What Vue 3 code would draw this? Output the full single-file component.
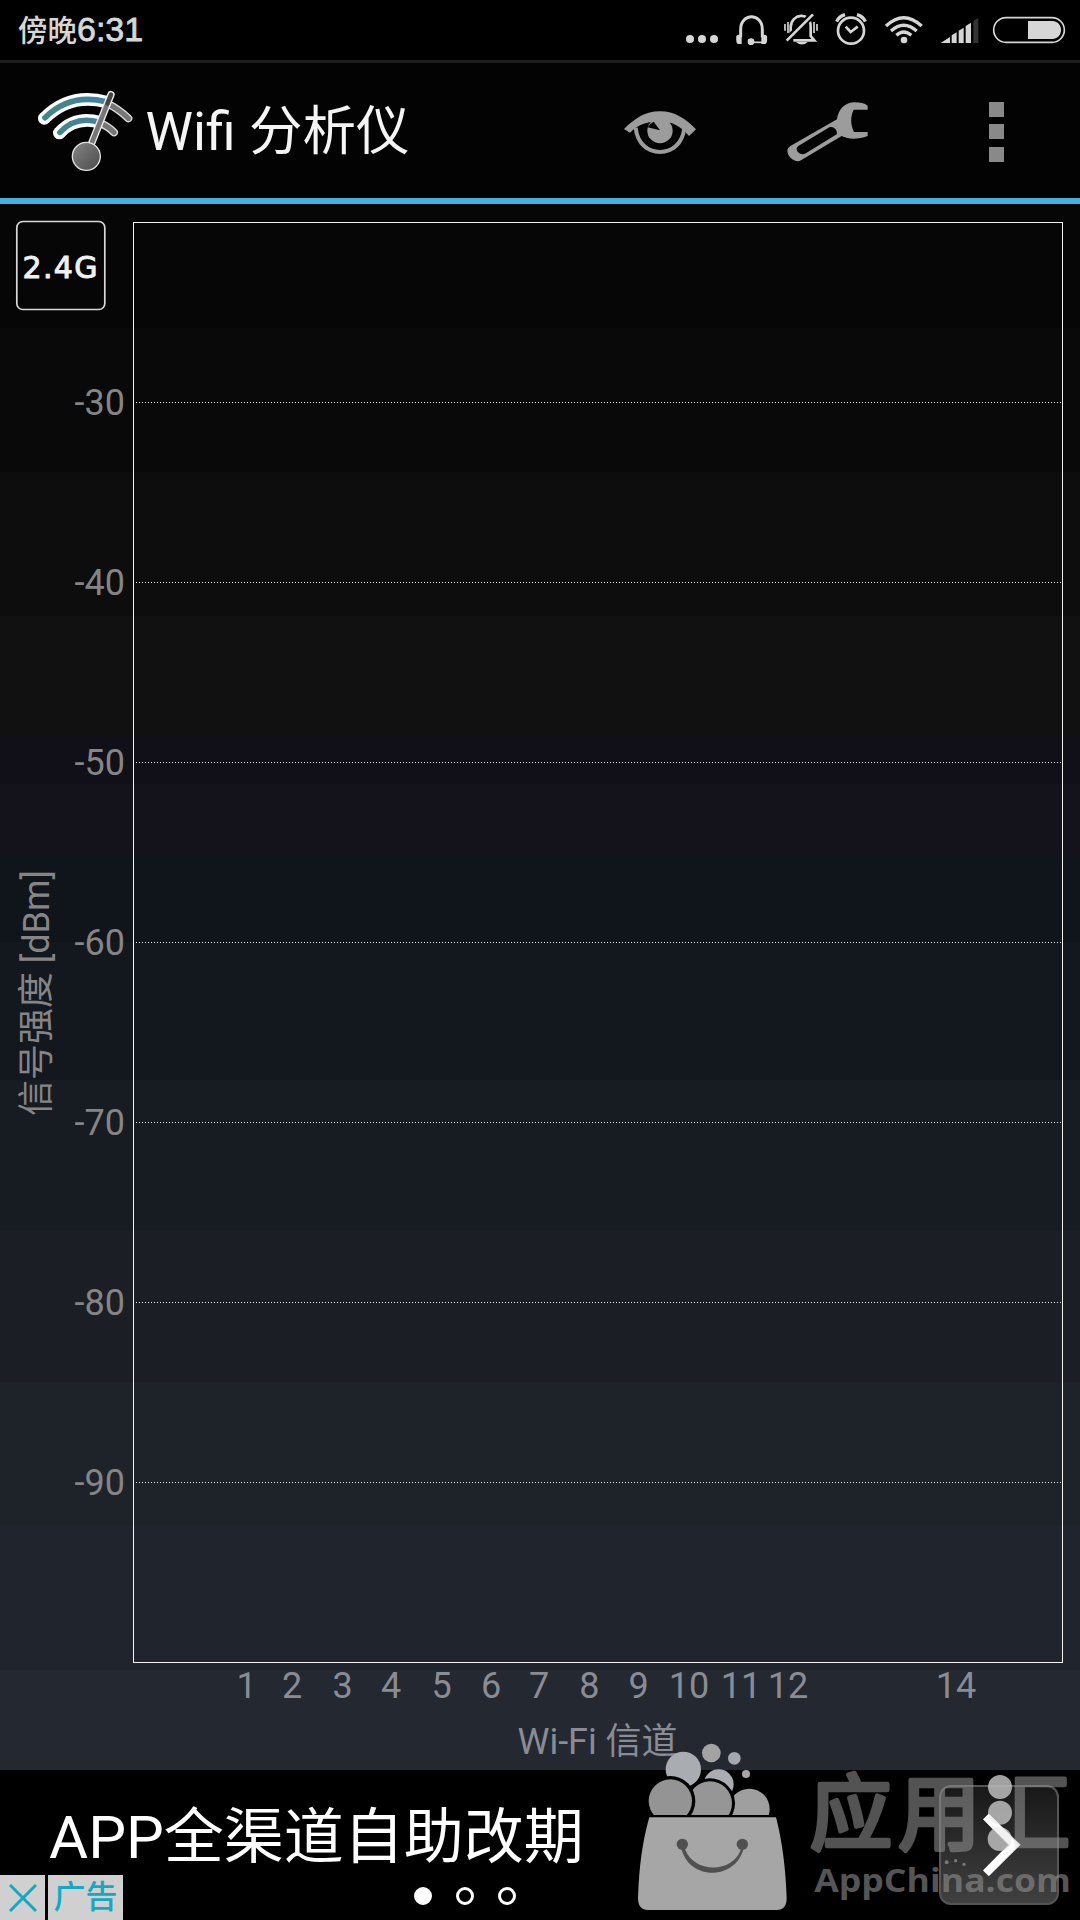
<script setup>
const levels = [-30, -40, -50, -60, -70, -80, -90].map((v, i) => ({ v, y: 402.5 + i * 180 }))
const channels = [
  [1, 246.5], [2, 292], [3, 342.5], [4, 391], [5, 441.5], [6, 491], [7, 539],
  [8, 589.3], [9, 638.7], [10, 689], [11, 741], [12, 788], [14, 956],
]
</script>

<template>
  <div class="screen">
    <div class="status">
      <div class="time"><span class="cjk">傍晚</span><span class="digits">6:31</span></div>
      <svg width="410" height="60" viewBox="0 0 1230 180" fill="none" stroke="#d6d6d6">
        <g fill="#d6d6d6" stroke="none">
          <circle cx="60" cy="117" r="12" /><circle cx="96" cy="117" r="12" /><circle cx="132" cy="117" r="12" />
        </g>
        <path d="M212 112V88C212 38 277 38 277 88V112" stroke-width="9" />
        <path d="M199 108Q207 100 215 108V132H205Q197 132 199 108ZM291 108Q283 100 274 108V132H285Q293 132 291 108Z" fill="#d6d6d6" stroke="none" />
        <circle cx="243" cy="125" r="10" fill="#d6d6d6" stroke="none" />
        <path d="M243 127H280" stroke-width="5" />
        <path d="M362 106V82C362 40 424 32 422 82V108L433 121H370" stroke-width="8" />
        <path d="M349 122L429 43" stroke="#000" stroke-width="20" />
        <path d="M350 122L429 43" stroke-width="8" />
        <path d="M345 72V92M354 66V99M432 66V99M441 72V92" stroke-width="5" />
        <path d="M378 126H413Q396 141 378 126Z" fill="#d6d6d6" stroke="none" />
        <circle cx="543" cy="92" r="39" stroke-width="8" />
        <path d="M527 80L542 96L563 80" stroke-width="8" />
        <path d="M500 65Q506 50 525 44M586 65Q580 50 561 44" stroke-width="10" />
        <path d="M648 78Q701 28 755 78M663 93Q701 59 740 93M679 106Q701 86 724 106" stroke-width="10" />
        <circle cx="702" cy="120" r="10" fill="#d6d6d6" stroke="none" />
        <path d="M812 129L840 111V129ZM845 129V106L860 97V129ZM866 129V92L881 83V129ZM887 129V78L903 68V129Z" fill="#d6d6d6" stroke="none" />
        <path d="M910 129V63L925 54V129Z" fill="#333" stroke="none" />
        <rect x="971" y="53" width="212" height="74" rx="37" stroke-width="5" />
        <path d="M1074 63H1146C1182 63 1182 117 1146 117H1074Z" fill="#d6d6d6" stroke="none" />
      </svg>
    </div>

    <header class="bar">
      <svg class="logo" width="100" height="86" viewBox="105 270 300 258" fill="none" stroke-linecap="round">
        <defs>
          <linearGradient id="teal" x1="0" x2="1"><stop offset="0" stop-color="#43897f" /><stop offset="1" stop-color="#3f83a5" /></linearGradient>
          <linearGradient id="ball" x1="0" y1="0" x2="1" y2="1"><stop offset="0" stop-color="#858585" /><stop offset="1" stop-color="#4b4b4b" /></linearGradient>
        </defs>
        <path d="M320 313Q353 327 385 358M300 373Q322 380 342 400" stroke="#ddd" stroke-width="24" />
        <path d="M320 313Q353 327 385 358M300 373Q322 380 342 400" stroke="#777" stroke-width="16" />
        <path d="M133 358Q210 280 320 309M178 402Q226 350 300 370" stroke="#fff" stroke-width="38" stroke-linecap="butt" />
        <circle cx="133" cy="358" r="19" fill="#fff" /><circle cx="178" cy="402" r="19" fill="#fff" />
        <path d="M135 356Q210 281 318 308M180 400Q226 350 296 369" stroke="url(#teal)" stroke-width="17" />
        <path d="M333 287L272 440" stroke="#eee" stroke-width="22" />
        <path d="M333 287L272 440" stroke="#777" stroke-width="14" />
        <path d="M333 287L322 314" stroke="#444" stroke-width="12" />
        <circle cx="259" cy="472" r="42" fill="url(#ball)" stroke="#e4e4e4" stroke-width="4" />
      </svg>
      <h1>Wifi 分析仪</h1>
      <div class="actions">
        <svg width="72" height="44" viewBox="72 98 216 132" fill="#9c9c9c">
          <path d="M72 152C105 120 135 99 180 99C225 99 255 120 288 153L267 173C242 144 215 129 180 129C145 129 115 138 90 163Z" />
          <path d="M107 148C112 198 145 221 180 221C215 221 248 198 253 148" fill="none" stroke="#9c9c9c" stroke-width="12" />
          <circle cx="180" cy="157" r="38" />
          <path d="M165 125H208V145H180Z" />
          <path d="M180 156L143 147Q148 136 161 130Z" fill="#030303" />
        </svg>
        <svg width="82" height="60" viewBox="562 66 246 180" fill="#9c9c9c" fill-rule="evenodd">
          <path d="M572 198L712 118C715 88 737 67 765 67C781 67 795 70 804 77V89H762C752 110 752 135 763 156H804V168C790 174 775 176 762 176C745 176 735 172 726 168L604 241C585 252 556 224 565 205ZM596 198L689 142C702 136 715 152 711 163L616 221C600 228 582 208 596 198Z" />
        </svg>
        <svg width="16" height="60" viewBox="0 0 16 60" fill="#898989"><path d="M0 0H15V15H0ZM0 22H15V37H0ZM0 45H15V60H0Z" /></svg>
      </div>
    </header>

    <svg class="chart" width="1080" height="1566" viewBox="0 204 1080 1566">
      <rect x="16.8" y="221.5" width="88" height="88" rx="6" fill="none" stroke="#d8d8d8" stroke-width="1.7" />
      <text class="band" x="22.5" y="277.5" textLength="75">2.4G</text>
      <g class="grid">
        <line v-for="l in levels" :key="l.v" x1="136" x2="1062" :y1="l.y" :y2="l.y" />
      </g>
      <rect class="frame" x="133.5" y="222.5" width="929" height="1440" />
      <g class="label">
        <text v-for="l in levels" :key="l.v" x="125" :y="l.y + 12" text-anchor="end">{{ l.v }}</text>
      </g>
      <g class="label low">
        <text v-for="c in channels" :key="c[0]" :x="c[1]" y="1698" text-anchor="middle">{{ c[0] }}</text>
        <text x="517.5" y="1754" textLength="160">Wi-Fi 信道</text>
      </g>
      <text class="label" transform="translate(48.5 1116) rotate(-90)" textLength="246">信号强度 [dBm]</text>
    </svg>

    <footer class="ad">
      <div class="copy">APP全渠道自助改期</div>
      <div class="next">
        <svg width="120" height="120" viewBox="0 0 120 120" fill="none"><path d="M47 31.5L74.5 60L47 88" stroke="#fff" stroke-width="8" /></svg>
      </div>
      <div class="tags">
        <span class="x"><svg width="28" height="28" viewBox="0 0 28 28"><path d="M1 1L27 27M27 1L1 27" stroke="#14a9c3" stroke-width="3" /></svg></span>
        <span class="tag">广告</span>
      </div>
      <div class="dots"><i class="on"></i><i></i><i></i></div>
    </footer>

    <svg class="mark" width="460" height="185" viewBox="0 0 1380 555">
      <defs>
        <clipPath id="rim"><rect x="0" y="0" width="560" height="240" /></clipPath>
        <clipPath id="box"><rect x="1184" y="90" width="190" height="290" /></clipPath>
      </defs>
      <g fill="#a6a6a6">
        <circle cx="190" cy="103" r="53" fill="#a9acb0" />
        <circle cx="274" cy="54" r="28" fill="#a3a3a3" />
        <circle cx="343" cy="70" r="19" fill="#a3a7af" />
        <circle cx="378" cy="117" r="12" />
        <circle cx="296" cy="148" r="45" fill="#a9acb0" />
        <g clip-path="url(#rim)">
          <circle cx="388" cy="222" r="61" fill="#9f9f9f" />
          <circle cx="270" cy="205" r="75" fill="#000" /><circle cx="270" cy="205" r="66" fill="#969696" />
          <circle cx="151" cy="198" r="75" fill="#000" /><circle cx="151" cy="198" r="65" fill="#949494" />
        </g>
        <path d="M60 240H480V248H60Z" fill="#000" />
        <path d="M88 247H468Q495 350 500 490Q500 525 470 525H84Q54 525 54 490Q58 350 88 247Z" />
        <g fill="#505050">
          <circle cx="187" cy="328" r="17" /><circle cx="367" cy="328" r="17" />
          <path d="M184 340C206 438 347 438 371 340L363 342C340 416 220 416 195 342Z" />
        </g>
      </g>
      <g class="brand">
        <text x="570" y="325">应</text>
        <text x="835" y="325">用</text>
        <text x="1104" y="325" clip-path="url(#box)">汇</text>
      </g>
      <text class="site" x="583" y="470" textLength="770" lengthAdjust="spacingAndGlyphs">AppChina.com</text>
      <g fill="#bdbdbd" fill-opacity=".85">
        <circle cx="1140" cy="156" r="36" /><circle cx="1140" cy="233" r="36" /><circle cx="1139" cy="312" r="36" />
      </g>
      <path d="M1098 245L1185 330L1098 416" transform="translate(0 -.5)" fill="none" stroke="#fff" stroke-opacity=".75" stroke-width="24" />
      <g fill="#777"><circle cx="980" cy="382" r="6" /><circle cx="1007" cy="377" r="5" /><circle cx="1032" cy="388" r="5" /></g>
    </svg>
  </div>
</template>

<style>
body { background: #000; }
</style>

<style scoped>
.screen {
  position: relative;
  display: flex;
  flex-direction: column;
  width: 1080px;
  height: 1920px;
  overflow: hidden;
  background: #000;
  font-family: Roboto, "Noto Sans CJK SC", sans-serif;
}
.status {
  display: flex;
  justify-content: space-between;
  height: 60px;
  border-bottom: 3px solid #1c1c1c;
}
.time { display: flex; align-items: baseline; padding-left: 18px; line-height: 57px; color: #d6d6d6; }
.cjk { font: 500 29.5px/57px "Noto Sans CJK SC", sans-serif; }
.digits { font: 34px/57px "Liberation Sans", sans-serif; -webkit-text-stroke: .8px #d6d6d6; }
.bar {
  box-sizing: border-box;
  display: flex;
  align-items: center;
  height: 141px;
  padding-top: 3px;
  border-bottom: 6px solid #46afe0;
  background: #030303;
}
.logo { margin-left: 35px; }
h1 { margin: 0 0 0 10.5px; color: #f5f5f5; font-size: 53.5px; font-weight: 400; line-height: 70px; white-space: pre; }
.actions { display: flex; align-items: center; margin-left: auto; padding-right: 75px; }
.actions svg:nth-child(1) { margin-top: 2px; }
.actions svg:nth-child(2) { margin: 0 120px 0 91px; }
.chart {
  flex: none;
  display: block;
  background: linear-gradient(
    #060606 124px, #090909 124px 268px, #0d0d0d 268px 412px, #111 412px 532px,
    #110f17 532px 580px, #14121a 580px 650px, #10141b 658px 738px, #13171e 738px 876px,
    #171b22 876px 1026px, #1b1f25 1026px 1178px, #1e2329 1178px 1321px,
    #20242c 1321px 1466px, #242830 1466px);
}
.band { font: 30px "DejaVu Sans", sans-serif; fill: #f0f0f0; stroke: #f0f0f0; stroke-width: 1px; }
.grid line { stroke: #f0f0f0; stroke-width: 1; stroke-dasharray: 1 2; shape-rendering: crispEdges; }
.frame { fill: none; stroke: #f2f2f2; stroke-width: 1; }
.label { font-size: 36px; fill: #858585; }
.low { fill: #8a8c95; }
.ad {
  display: grid;
  grid-template-columns: 1fr auto;
  grid-template-rows: 105px 45px;
  height: 150px;
  position: relative;
}
.copy { padding: 23px 0 0 49px; color: #fff; font-size: 60px; line-height: 90px; white-space: nowrap; }
.next {
  grid-row: 1 / 3;
  grid-column: 2;
  box-sizing: border-box;
  width: 120px;
  height: 120px;
  margin: 15px 21px 0 0;
  border: 2px solid #555;
  border-radius: 12px;
  background: linear-gradient(#181818, #404040);
}
.next svg { display: block; margin: -2px; }
.tags { grid-row: 2; grid-column: 1; display: flex; gap: 3px; }
.x, .tag { display: flex; align-items: center; justify-content: center; height: 45px; background: #d0d0d0; }
.x { width: 45px; }
.tag { width: 75px; color: #14a9c3; font-size: 32px; font-weight: 500; line-height: 45px; }
.dots { position: absolute; left: 414px; top: 117px; display: flex; gap: 24px; }
.dots i { box-sizing: border-box; width: 18px; height: 18px; border: 3px solid #fff; border-radius: 50%; }
.dots .on { background: #fff; }
.mark { position: absolute; left: 620px; top: 1735px; }
.brand { font: 400 246px "Noto Sans CJK SC", sans-serif; fill: #909090; stroke: #909090; stroke-width: 14px; stroke-linejoin: round; opacity: .58; }
.site { font: 700 98px "Open Sans", sans-serif; fill: #909090; fill-opacity: .6; }
</style>
